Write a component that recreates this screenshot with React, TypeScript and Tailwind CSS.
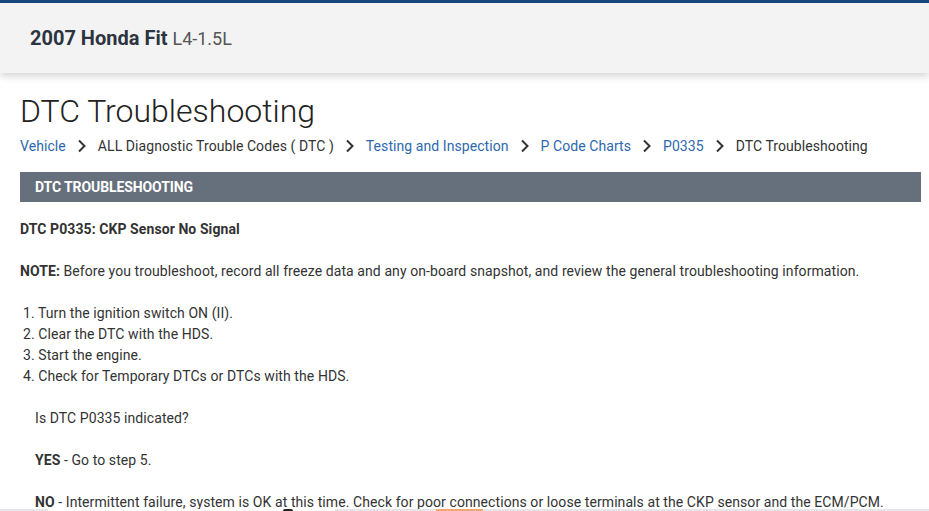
import React from "react";

const crumbs: { label: string; link: boolean }[] = [
  { label: "Vehicle", link: true },
  { label: "ALL Diagnostic Trouble Codes ( DTC )", link: false },
  { label: "Testing and Inspection", link: true },
  { label: "P Code Charts", link: true },
  { label: "P0335", link: true },
  { label: "DTC Troubleshooting", link: false },
];

const steps = [
  "Turn the ignition switch ON (II).",
  "Clear the DTC with the HDS.",
  "Start the engine.",
  "Check for Temporary DTCs or DTCs with the HDS.",
];

function Chevron() {
  return (
    <svg width="10" height="14" viewBox="0 0 10 14" className="mx-[11px] shrink-0">
      <path d="M2 1.5 L7.5 7 L2 12.5" fill="none" stroke="#333" strokeWidth="2" />
    </svg>
  );
}

export default function App() {
  return (
    <div className="relative h-[511px] w-[929px] overflow-hidden bg-white font-['Roboto',sans-serif] text-[#333]">
      <header className="h-[73px] border-t-[3px] border-[#17477f] bg-[#f3f3f3] shadow-[0_3px_8px_rgba(0,0,0,0.18)]">
        <div className="flex items-baseline pl-[30px] pt-[23px]">
          <span className="text-[20px] font-bold leading-6 text-[#2c3440]">2007 Honda Fit</span>
          <span className="ml-[5px] text-[18px] leading-6 text-[#555]">L4-1.5L</span>
        </div>
      </header>

      <main className="pl-5 pr-2">
        <h1 className="mt-[19px] text-[32px] font-light leading-[38px] text-[#222]">DTC Troubleshooting</h1>

        <nav className="mt-[6px] flex items-center text-[14px] leading-5 tracking-[0.07px]">
          {crumbs.map((c, i) => (
            <React.Fragment key={c.label}>
              {i > 0 ? <Chevron /> : null}
              <span className={c.link ? "text-[#2d68b0]" : "text-[#333]"}>{c.label}</span>
            </React.Fragment>
          ))}
        </nav>

        <div className="mt-4 flex h-[30px] items-center bg-[#66707c] pl-[15px]">
          <span className="text-[14px] font-bold tracking-[-0.1px] text-white">DTC TROUBLESHOOTING</span>
        </div>

        <div className="mt-[17px] text-[14px] leading-[21px] tracking-[0.08px]">
          <p className="font-bold">DTC P0335: CKP Sensor No Signal</p>

          <p className="mt-[21px]">
            <span className="font-bold">NOTE:</span> Before you troubleshoot, record all freeze data and any on-board
            snapshot, and review the general troubleshooting information.
          </p>

          <ol className="mt-[21px] pl-[3px]">
            {steps.map((s, i) => (
              <li key={s}>
                {i + 1}. {s}
              </li>
            ))}
          </ol>

          <div className="pl-[15px]">
            <p className="mt-[21px]">Is DTC P0335 indicated?</p>
            <p className="mt-[21px]">
              <span className="font-bold">YES</span> - Go to step 5.
            </p>
            <p className="mt-[21px]">
              <span className="font-bold">NO</span> - Intermittent failure, system is OK at this time. Check for poor
              connections or loose terminals at the CKP sensor and the ECM/PCM.
            </p>
          </div>
        </div>
      </main>

      <div className="absolute bottom-0 left-0 flex h-[2px] w-full bg-[#e4e6e9]">
        <div className="relative ml-[48px] h-full w-[287px] bg-white">
          <div className="absolute left-[235px] top-0 h-full w-[10px] rounded-t-full bg-[#222]" />
        </div>
        <div className="ml-[101px] h-full w-[47px] bg-[#f2a870]" />
      </div>
    </div>
  );
}
